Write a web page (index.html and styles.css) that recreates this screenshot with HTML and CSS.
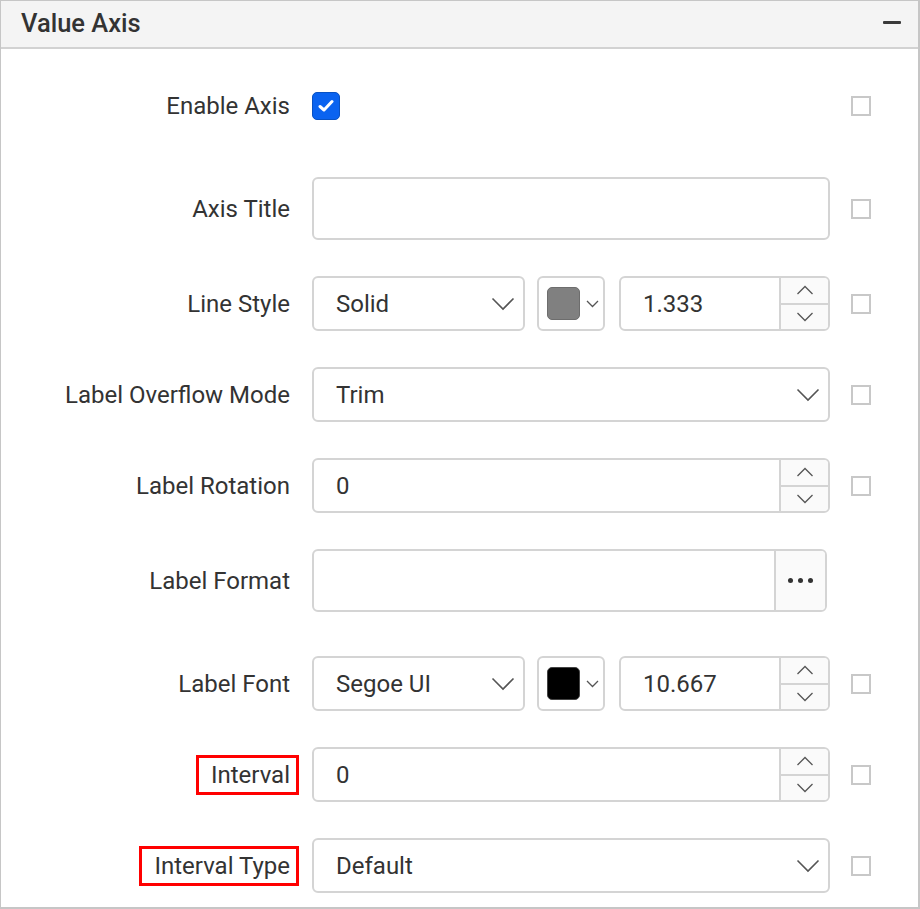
FILE: index.html
```html
<!DOCTYPE html>
<html>
<head>
<meta charset="utf-8">
<link rel="stylesheet" href="styles.css">
</head>
<body>
<div class="panel">
  <div class="header">
    <span class="title">Value Axis</span>
    <span class="collapse"></span>
  </div>
  <div class="rows">
    <div class="row row-enable">
      <div class="label">Enable Axis</div>
      <div class="control">
        <span class="check-on">
          <svg width="16" height="14" viewBox="0 0 16 14"><path d="M2 7.5 L6 11 L14 2.5" fill="none" stroke="#fff" stroke-width="3" stroke-linecap="round" stroke-linejoin="round"/></svg>
        </span>
      </div>
      <span class="cb"></span>
    </div>

    <div class="row row-title">
      <div class="label">Axis Title</div>
      <div class="control">
        <div class="box tall"></div>
      </div>
      <span class="cb"></span>
    </div>

    <div class="row">
      <div class="label">Line Style</div>
      <div class="control split">
        <div class="box drop narrow"><span class="val">Solid</span><svg class="chev" width="24" height="14" viewBox="0 0 24 14"><path d="M1.5 1.5 L12 12 L22.5 1.5" fill="none" stroke="#555" stroke-width="1.6"/></svg></div>
        <div class="box color"><span class="swatch gray"></span><svg class="chev-s" width="13" height="8" viewBox="0 0 13 8"><path d="M1 1 L6.5 6.5 L12 1" fill="none" stroke="#555" stroke-width="1.3"/></svg></div>
        <div class="box num narrow-num"><span class="val">1.333</span>
          <div class="spin">
            <div class="spin-btn"><svg width="18" height="10" viewBox="0 0 18 10"><path d="M1.5 9 L9 1.5 L16.5 9" fill="none" stroke="#555" stroke-width="1.3"/></svg></div>
            <div class="spin-btn"><svg width="18" height="10" viewBox="0 0 18 10"><path d="M1.5 1 L9 8.5 L16.5 1" fill="none" stroke="#555" stroke-width="1.3"/></svg></div>
          </div>
        </div>
      </div>
      <span class="cb"></span>
    </div>

    <div class="row">
      <div class="label">Label Overflow Mode</div>
      <div class="control">
        <div class="box drop"><span class="val">Trim</span><svg class="chev" width="24" height="14" viewBox="0 0 24 14"><path d="M1.5 1.5 L12 12 L22.5 1.5" fill="none" stroke="#555" stroke-width="1.6"/></svg></div>
      </div>
      <span class="cb"></span>
    </div>

    <div class="row">
      <div class="label">Label Rotation</div>
      <div class="control">
        <div class="box num"><span class="val">0</span>
          <div class="spin">
            <div class="spin-btn"><svg width="18" height="10" viewBox="0 0 18 10"><path d="M1.5 9 L9 1.5 L16.5 9" fill="none" stroke="#555" stroke-width="1.3"/></svg></div>
            <div class="spin-btn"><svg width="18" height="10" viewBox="0 0 18 10"><path d="M1.5 1 L9 8.5 L16.5 1" fill="none" stroke="#555" stroke-width="1.3"/></svg></div>
          </div>
        </div>
      </div>
      <span class="cb"></span>
    </div>

    <div class="row row-format">
      <div class="label">Label Format</div>
      <div class="control">
        <div class="box tall fmt"><span class="val"></span>
          <div class="ellipsis"><i></i><i></i><i></i></div>
        </div>
      </div>
      <span class="cb-empty"></span>
    </div>

    <div class="row">
      <div class="label">Label Font</div>
      <div class="control split">
        <div class="box drop narrow"><span class="val">Segoe UI</span><svg class="chev" width="24" height="14" viewBox="0 0 24 14"><path d="M1.5 1.5 L12 12 L22.5 1.5" fill="none" stroke="#555" stroke-width="1.6"/></svg></div>
        <div class="box color"><span class="swatch black"></span><svg class="chev-s" width="13" height="8" viewBox="0 0 13 8"><path d="M1 1 L6.5 6.5 L12 1" fill="none" stroke="#555" stroke-width="1.3"/></svg></div>
        <div class="box num narrow-num"><span class="val">10.667</span>
          <div class="spin">
            <div class="spin-btn"><svg width="18" height="10" viewBox="0 0 18 10"><path d="M1.5 9 L9 1.5 L16.5 9" fill="none" stroke="#555" stroke-width="1.3"/></svg></div>
            <div class="spin-btn"><svg width="18" height="10" viewBox="0 0 18 10"><path d="M1.5 1 L9 8.5 L16.5 1" fill="none" stroke="#555" stroke-width="1.3"/></svg></div>
          </div>
        </div>
      </div>
      <span class="cb"></span>
    </div>

    <div class="row">
      <div class="label"><span class="mark">Interval</span></div>
      <div class="control">
        <div class="box num"><span class="val">0</span>
          <div class="spin">
            <div class="spin-btn"><svg width="18" height="10" viewBox="0 0 18 10"><path d="M1.5 9 L9 1.5 L16.5 9" fill="none" stroke="#555" stroke-width="1.3"/></svg></div>
            <div class="spin-btn"><svg width="18" height="10" viewBox="0 0 18 10"><path d="M1.5 1 L9 8.5 L16.5 1" fill="none" stroke="#555" stroke-width="1.3"/></svg></div>
          </div>
        </div>
      </div>
      <span class="cb"></span>
    </div>

    <div class="row">
      <div class="label"><span class="mark">Interval Type</span></div>
      <div class="control">
        <div class="box drop"><span class="val">Default</span><svg class="chev" width="24" height="14" viewBox="0 0 24 14"><path d="M1.5 1.5 L12 12 L22.5 1.5" fill="none" stroke="#555" stroke-width="1.6"/></svg></div>
      </div>
      <span class="cb"></span>
    </div>
  </div>
</div>
</body>
</html>
```

FILE: styles.css
```css
* { box-sizing: border-box; }
html, body { margin: 0; padding: 0; background: #fff; }
body {
  font-family: Roboto, "Liberation Sans", sans-serif;
  color: #333;
  font-size: 24px;
}
.panel {
  width: 920px;
  height: 909px;
  border: 1px solid #c6c6c6;
  border-bottom-width: 2px;
  border-right-width: 2px;
  overflow: hidden;
}
.header {
  height: 48px;
  background: #f4f4f4;
  border-bottom: 2px solid #d2d2d2;
  display: flex;
  align-items: center;
  justify-content: space-between;
  padding: 0 17px 0 20px;
}
.title {
  font-size: 25.5px;
  font-weight: 500;
  color: #333;
  margin-top: -3px;
}
.collapse {
  width: 18px;
  height: 3px;
  background: #3a3a3a;
  border-radius: 1px;
  margin-top: -3px;
}
.rows {
  display: flex;
  flex-direction: column;
  gap: 36px;
  padding-top: 43px;
}
.row {
  display: flex;
  align-items: center;
  min-height: 55px;
}
.row-enable { min-height: 28px; margin-bottom: 21px; }
.row-format { margin-bottom: 8px; }
.label {
  width: 289px;
  text-align: right;
  line-height: 28px;
  flex: none;
}
.mark {
  display: inline-block;
  border: 3px solid #ff0000;
  padding: 3px 6px 3px 12px;
  margin-right: -9px;
}
.control {
  margin-left: 22px;
  width: 518px;
  flex: none;
  display: flex;
  align-items: center;
}
.control.split { gap: 12px; }
.cb {
  width: 20px;
  height: 20px;
  border: 2px solid #c8c8c8;
  margin-left: 21px;
  flex: none;
}
.cb-empty { width: 20px; margin-left: 21px; }
.check-on {
  width: 28px;
  height: 28px;
  border-radius: 5px;
  background: #0a63f0;
  border: 1px solid #0852c4;
  display: flex;
  align-items: center;
  justify-content: center;
}
.box {
  border: 2px solid #d4d4d4;
  border-radius: 6px;
  height: 55px;
  width: 518px;
  display: flex;
  align-items: center;
  background: #fff;
  overflow: hidden;
}
.box.tall { height: 63px; }
.box.fmt { width: 515px; }
.val {
  flex: 1;
  padding-left: 22px;
}
.drop .chev { margin-right: 8px; }
.narrow { width: 213px; }
.color {
  width: 68px;
  padding-left: 8px;
  gap: 6px;
}
.swatch {
  width: 33px;
  height: 33px;
  border-radius: 5px;
  border: 1px solid #666;
}
.swatch.gray { background: #808080; border-color: #6d6d6d; }
.swatch.black { background: #000; border-color: #444; }
.narrow-num { width: 211px; margin-left: 2px; }
.spin {
  width: 49px;
  height: 100%;
  border-left: 2px solid #d4d4d4;
  display: flex;
  flex-direction: column;
  background: #fafafa;
}
.spin-btn {
  flex: 1;
  display: flex;
  align-items: center;
  justify-content: center;
}
.spin-btn + .spin-btn { border-top: 2px solid #d4d4d4; }
.ellipsis {
  width: 51px;
  height: 100%;
  border-left: 2px solid #d4d4d4;
  background: #fafafa;
  display: flex;
  align-items: center;
  justify-content: center;
  gap: 5px;
}
.ellipsis i {
  width: 5px;
  height: 5px;
  border-radius: 50%;
  background: #333;
}
```
